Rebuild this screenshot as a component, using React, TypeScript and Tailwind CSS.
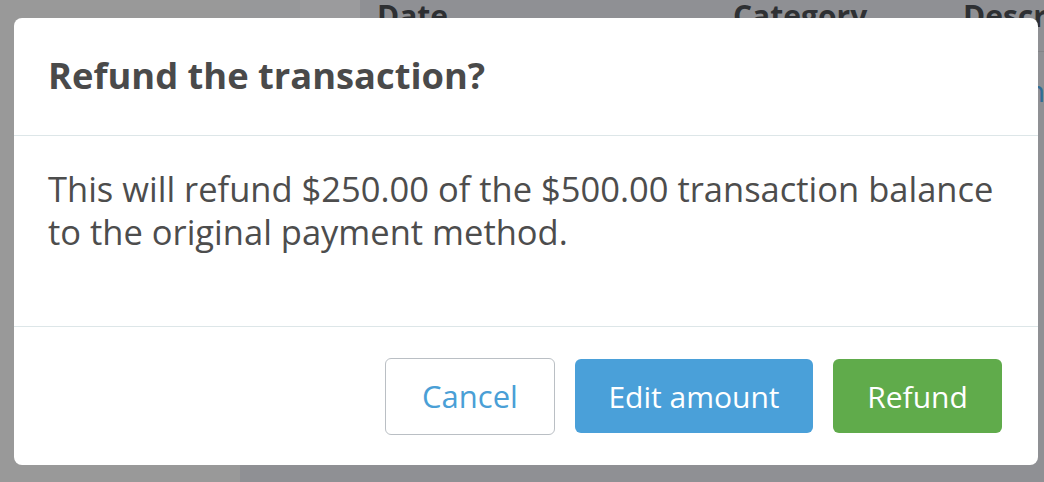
import React from "react";

export default function App() {
  return (
    <div className="relative w-[1044px] h-[482px] overflow-hidden bg-[#8f9094] font-['Open_Sans',sans-serif]">
      {/* background page (dimmed) */}
      <div className="flex h-full">
        <div className="w-[240px] shrink-0 h-full bg-[#999999]" />
        <div className="flex-1 min-w-0 flex flex-col overflow-hidden">
          <div className="flex h-[52px] shrink-0 border-b border-[#838488]">
            <div className="w-[60px] shrink-0 bg-[#97989a]" />
            <div className="w-[60px] shrink-0 bg-[#9b9b9d]" />
            <div className="flex-1 min-w-0 flex text-[30px] font-bold leading-none text-[#2e3033] pt-[1px]">
              <div className="w-[17px] shrink-0" />
              <div className="w-[356px] shrink-0">Date</div>
              <div className="w-[230px] shrink-0">Category</div>
              <div className="shrink-0 whitespace-nowrap">Description</div>
            </div>
          </div>
          <div className="flex pt-[24px] text-[30px] leading-none text-[#2f6c96]">
            <div className="w-[723px] shrink-0" />
            <div className="shrink-0 whitespace-nowrap">Refunde</div>
          </div>
        </div>
      </div>

      {/* modal */}
      <div className="absolute left-[14px] top-[18px] w-[1024px] h-[447px] rounded-[8px] bg-white flex flex-col overflow-hidden">
        <div className="h-[118px] shrink-0 pl-[34px] pt-[35px] border-b border-[#dde6e8]">
          <h1 className="text-[36.3px] leading-[44px] font-bold text-[#4a4a4a]">
            Refund the transaction?
          </h1>
        </div>
        <div className="h-[191px] shrink-0 pl-[34px] pr-[30px] pt-[31px] border-b border-[#dde6e8]">
          <p className="text-[34.5px] leading-[43px] text-[#4d4d4d]">
            This will refund $250.00 of the $500.00 transaction balance to the original payment method.
          </p>
        </div>
        <div className="flex-1 flex items-center justify-end gap-[20px] pr-[36px]">
          <button className="w-[170px] h-[77px] rounded-[6px] border-[1.5px] border-[#babfc4] bg-white text-[31px] text-[#4a9fd6]">
            Cancel
          </button>
          <button className="w-[238px] h-[74px] rounded-[6px] bg-[#4aa0d9] text-[30px] text-white">
            Edit amount
          </button>
          <button className="w-[169px] h-[74px] rounded-[6px] bg-[#60ab4b] text-[30px] text-white">
            Refund
          </button>
        </div>
      </div>
    </div>
  );
}
